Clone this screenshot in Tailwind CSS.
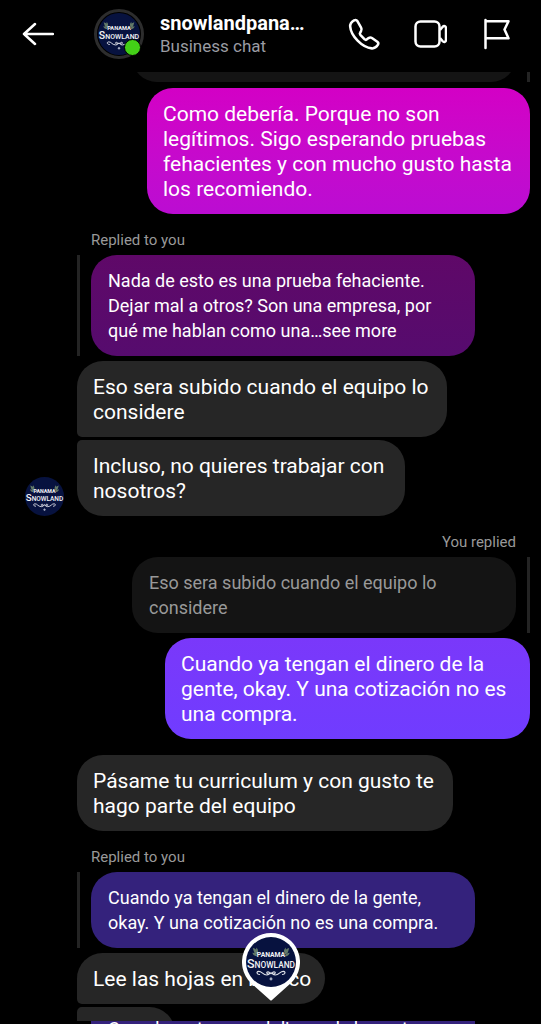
<!DOCTYPE html>
<html lang="es">
<head>
<meta charset="utf-8">
<meta name="viewport" content="width=device-width, initial-scale=1">
<title>Business chat</title>
<script src="https://cdn.jsdelivr.net/npm/@tailwindcss/browser@4"></script>
</head>
<body class="relative flex h-screen flex-col overflow-hidden bg-black font-['Roboto',sans-serif] text-white">

<!-- Shared logo -->
<svg class="hidden" aria-hidden="true">
  <symbol id="logo" viewBox="0 0 48 48">
    <circle cx="24" cy="24" r="24" fill="#07123f"/>
    <g fill="#637a68">
      <path d="M6.500 10.500q3.500.500 4 3.500l1.500 3q-4-.500-4.500-3zM6 15q3.500 0 5 3.500-4 0-5-3.500zM10 10q2 2 1.500 5l-2-2z"/>
      <path d="M41.500 10.500q-3.500.500-4 3.500l-1.500 3q4-.500 4.500-3zM42 15q-3.500 0-5 3.500 4 0 5-3.500zM38 10q-2 2-1.500 5l2-2z"/>
    </g>
    <g fill="#f4f4f6" font-family="Roboto, sans-serif" text-anchor="middle">
      <text x="24" y="19.500" font-weight="700" font-size="6.500">PANAMA</text>
      <text x="24" y="30" font-weight="500" font-size="8"><tspan font-size="12">S</tspan>NOWLAND</text>
    </g>
    <g fill="none" stroke="#dfe1e8" stroke-width="1.100" stroke-linecap="round">
      <path d="M13 36c-2.500 0-3.500-2.500-1-3 3-.500 4 3.500 8 3.500 3 0 3.500-3 1-3-1.500 0-1.500 1.700.500 2q1.500.200 2.500-1"/>
      <path d="M35 36c2.500 0 3.500-2.500 1-3-3-.500-4 3.500-8 3.500-3 0-3.500-3-1-3 1.500 0 1.500 1.700-.500 2q-1.500.200-2.500-1"/>
    </g>
    <path d="m24 38.500 1.700 1.700-1.700 1.700-1.700-1.700z" fill="#aab0c4"/>
  </symbol>
</svg>

<header class="flex h-[72px] shrink-0 items-center pr-7 pl-[22px] pb-[5px]">
  <button type="button" aria-label="Back" class="flex size-8 shrink-0">
    <svg viewBox="0 0 32 32" class="size-8" fill="none" stroke="#fff" stroke-width="2.500" stroke-linecap="round" stroke-linejoin="round"><path d="M31 16H2M13 6 2 16l11 10"/></svg>
  </button>
  <div class="relative ml-10 size-[50px] shrink-0 rounded-full border-3 border-[#2d2d2d] p-px">
    <svg class="size-full" role="img" aria-label="Panama Snowland"><use href="#logo"/></svg>
    <span class="absolute right-0 bottom-0 size-[17px] rounded-full border border-black bg-[#43d017]"></span>
  </div>
  <div class="ml-4 min-w-0 flex-1">
    <h1 class="truncate text-[20px] leading-6 font-bold">snowlandpana…</h1>
    <p class="text-[17px] leading-[22px] text-[#9a9ca3]">Business chat</p>
  </div>
  <div class="flex shrink-0 gap-8">
    <button type="button" aria-label="Call" class="size-[34px]">
      <svg viewBox="-1 -1 35 35" class="size-[34px]" fill="none" stroke="#fff" stroke-width="2.600" stroke-linejoin="round"><path d="M6.300 2.500C3.800 3.900 2 5.500 2.300 9 3 18.500 14.500 30.500 24.500 31.300c3.500.300 5-1.600 6.400-3.800.700-1.200.300-2.200-.700-3L24.700 20.700c-1.200-.800-2.400-.700-3.500 0l-2 1.500c-.700.500-1.300.400-2-.200l-4.500-4.700c-.600-.700-.700-1.400-.200-2.100l1-1.700c.700-1.100.700-2.300 0-3.500L9.700 3.200c-.900-1.300-2.100-1.400-3.400-.700Z"/></svg>
    </button>
    <button type="button" aria-label="Video call" class="size-[34px]">
      <svg viewBox="0 0 34 34" class="size-[34px]" fill="none" stroke="#fff" stroke-width="2.500" stroke-linejoin="round"><rect x="2.500" y="4.500" width="24" height="25" rx="5"/><path d="m27 13 2.500-3c1.500-1.700 3.500-.900 3.500 1.200v11.600c0 2.100-2 2.900-3.500 1.200l-2.500-3"/></svg>
    </button>
    <button type="button" aria-label="Flag" class="size-[34px]">
      <svg viewBox="0 0 34 34" class="size-[34px]" fill="none" stroke="#fff" stroke-width="2.500" stroke-linecap="round" stroke-linejoin="round"><path d="M6.500 31V3M6.500 4.300h23L25.500 12.500l4 8.800h-23"/></svg>
    </button>
  </div>
</header>

<main class="min-h-0 flex-1 overflow-hidden pr-[11px] pl-[25px] text-[21px] leading-[25px]">
  <div class="flex h-[10px] justify-end gap-[11px]">
    <div class="h-full w-[384px] overflow-hidden"><div class="-mt-10 h-[50px] rounded-[26px] bg-[#141414]"></div></div>
    <div class="w-[3px] bg-[#242424]"></div>
  </div>

  <div class="mt-[6px] ml-auto w-fit min-w-[383px] rounded-[26px] bg-linear-to-b from-[#d300c5] to-[#bb0cd2] pr-[14px] pl-4 pt-[14px] pb-3">Como debería. Porque no son<br>legítimos. Sigo esperando pruebas<br>fehacientes y con mucho gusto hasta<br>los recomiendo.</div>

  <p class="mt-4 ml-[66px] text-[15px] leading-5 text-[#999]">Replied to you</p>
  <div class="mt-[5px] ml-[52px] flex gap-[11px]">
    <div class="w-[3px] bg-[#242424]"></div>
    <blockquote class="w-[384px] rounded-[26px] bg-linear-to-b from-[#5f0868] to-[#560b6e] px-[17px] py-[13px] text-[18px]">Nada de esto es una prueba fehaciente.<br>Dejar mal a otros? Son una empresa, por<br>qué me hablan como una…see more</blockquote>
  </div>

  <div class="mt-[5px] flex items-end gap-[13px]">
    <svg class="size-[39px] shrink-0" role="img" aria-label="Panama Snowland"><use href="#logo"/></svg>
    <div class="flex flex-col items-start gap-[3px]">
      <div class="min-w-[370px] rounded-[26px] rounded-bl-[5px] bg-[#262626] pr-[14px] pl-4 pt-[14px] pb-3">Eso sera subido cuando el equipo lo<br>considere</div>
      <div class="min-w-[328px] rounded-[26px] rounded-tl-[5px] bg-[#262626] pr-[14px] pl-4 pt-[14px] pb-3">Incluso, no quieres trabajar con<br>nosotros?</div>
    </div>
  </div>

  <p class="mt-4 mr-[14px] text-right text-[15px] leading-5 text-[#999]">You replied</p>
  <div class="mt-[5px] flex justify-end gap-[11px]">
    <blockquote class="w-[384px] rounded-[26px] bg-[#141414] px-[17px] py-[13px] text-[18px] text-[#999]">Eso sera subido cuando el equipo lo<br>considere</blockquote>
    <div class="w-[3px] bg-[#242424]"></div>
  </div>
  <div class="mt-[5px] ml-auto w-fit min-w-[365px] rounded-[26px] bg-linear-to-b from-[#7a38fa] to-[#703cff] pr-[14px] pl-4 pt-[14px] pb-3">Cuando ya tengan el dinero de la<br>gente, okay. Y una cotización no es<br>una compra.</div>

  <div class="mt-4 ml-[52px] w-fit min-w-[376px] rounded-[26px] bg-[#262626] pr-[14px] pl-4 pt-[14px] pb-3">Pásame tu curriculum y con gusto te<br>hago parte del equipo</div>

  <p class="mt-4 ml-[66px] text-[15px] leading-5 text-[#999]">Replied to you</p>
  <div class="mt-[5px] ml-[52px] flex gap-[11px]">
    <div class="w-[3px] bg-[#242424]"></div>
    <blockquote class="w-[384px] rounded-[26px] bg-[#34227c] px-[17px] py-[13px] text-[18px]">Cuando ya tengan el dinero de la gente,<br>okay. Y una cotización no es una compra.</blockquote>
  </div>
  <div class="mt-[5px] ml-[52px] w-fit min-w-[248px] rounded-[26px] rounded-bl-[5px] bg-[#262626] pr-[14px] pl-4 pt-[14px] pb-3">Lee las hojas en blanco</div>
  <div class="mt-[3px] ml-[52px] h-[51px] w-[98px] rounded-[26px] rounded-tl-[5px] bg-[#262626]"></div>
</main>

<!-- Next quoted message entering at the bottom edge -->
<footer class="h-[3px] shrink-0 overflow-hidden pl-[91px]">
  <blockquote class="-mt-4 w-[384px] bg-[#34227c] px-[17px] pt-[11px] text-[18px] leading-[25px]">Cuando ya tengan el dinero de la gente,</blockquote>
</footer>

<!-- Floating read marker -->
<div class="absolute bottom-[23px] left-1/2 h-[68px] w-[58px] -translate-x-1/2">
  <svg viewBox="0 0 58 68" class="h-[68px] w-[58px]" role="img" aria-label="Panama Snowland">
    <path d="M29 0a29 29 0 0 1 20 50L30 67q-1 1-2 0L9 50A29 29 0 0 1 29 0Z" fill="#fff"/>
    <use href="#logo" x="4" y="4" width="50" height="50"/>
  </svg>
</div>
</body>
</html>
